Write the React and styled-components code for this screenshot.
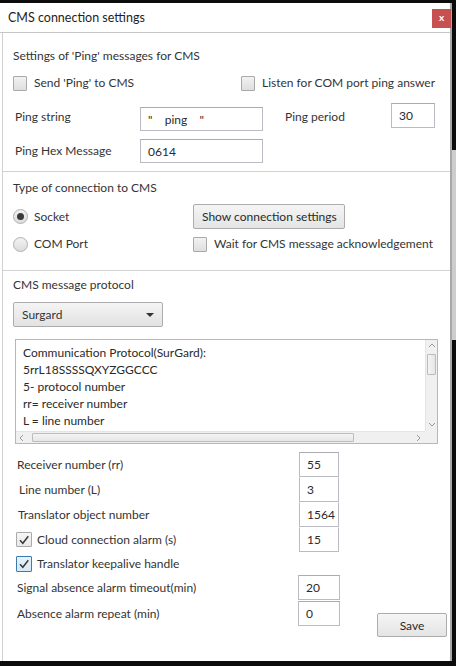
import React from "react";
import styled, { createGlobalStyle } from "styled-components";

const Global = createGlobalStyle`
  html, body { margin: 0; padding: 0; height: 666px; overflow: hidden; background: #0c0c0c; }
  * { box-sizing: border-box; }
  body { font-family: Lato, "Open Sans", "Noto Sans", sans-serif; font-size: 12px; color: #343434; }
`;

const Frame = styled.div`
  display: flex;
  height: 666px;
  padding: 3px 0 5px 0;
`;

const Window = styled.div`
  width: 452px;
  background: #fff;
  border-right: 2px solid #a8a8a8;
  display: flex;
  flex-direction: column;
`;

const SideStrip = styled.div`
  flex: 1;
  margin-top: -3px;
  margin-bottom: -5px;
  background: linear-gradient(to bottom, #0c0c0c 0, #0c0c0c 150px, #cdcdcd 150px, #cdcdcd 340px, #0c0c0c 340px);
`;

const TitleBar = styled.div`
  height: 30px;
  border-bottom: 1px solid #c6c6c6;
  display: flex;
  align-items: flex-start;
  justify-content: space-between;
  padding-left: 8px;
`;

const Title = styled.div`
  font-size: 12.5px;
  line-height: 16px;
  margin-top: 7px;
  color: #1e1e1e;
`;

const CloseBtn = styled.div`
  width: 19px;
  height: 19px;
  margin-top: 6px;
  margin-right: -1px;
  background: #c75050;
  color: #fff;
  font-size: 10px;
  font-weight: bold;
  line-height: 17px;
  text-align: center;
`;

const Body = styled.div`
  flex: 1;
  margin-left: 2px;
  border-left: 1px solid #d0d0d0;
  display: flex;
  flex-direction: column;
`;

const Section = styled.div`
  padding: ${(p) => p.$pad};
  border-bottom: ${(p) => (p.$last ? "none" : "1px solid #d2d2d2")};
  display: flex;
  flex-direction: column;
`;

const Heading = styled.div`
  line-height: 16px;
  height: 16px;
`;

const Text = styled.span`
  line-height: 16px;
  white-space: nowrap;
`;

const CheckRow = styled.div`
  display: grid;
  grid-template-columns: 228px auto;
  margin-top: ${(p) => p.$mt || 0}px;
  height: ${(p) => p.$h || 15}px;
  align-items: center;
`;

const CheckLabel = styled.label`
  display: flex;
  align-items: center;
  gap: ${(p) => p.$gap || 7}px;
  padding-left: ${(p) => p.$indent || 0}px;
  white-space: nowrap;
`;

const Box = styled.span`
  width: ${(p) => p.$w || 14}px;
  height: ${(p) => p.$h || 15}px;
  flex: none;
  border: 1px solid ${(p) => (p.$focus ? "#3d7bad" : "#a9a9a9")};
  background: ${(p) =>
    p.$focus
      ? "linear-gradient(#e6f2fb, #d6e9f7)"
      : p.$checked
      ? "linear-gradient(#f6f6f6, #e9e9e9)"
      : "linear-gradient(#f2f2f2, #dedede)"};
  border-radius: 1px;
  display: flex;
  align-items: center;
  justify-content: center;
`;

const Radio = styled.span`
  width: 15px;
  height: 15px;
  flex: none;
  border-radius: 50%;
  border: 1px solid #b0b0b0;
  background: linear-gradient(#f2f2f2, #dcdcdc);
  display: flex;
  align-items: center;
  justify-content: center;
  &::after {
    content: "";
    width: 7px;
    height: 7px;
    border-radius: 50%;
    background: ${(p) => (p.$on ? "#3a3a3a" : "transparent")};
  }
`;

const FieldGrid = styled.div`
  display: grid;
  grid-template-columns: ${(p) => p.$cols};
  height: ${(p) => p.$h}px;
  margin-top: ${(p) => p.$mt || 0}px;
  padding-left: ${(p) => p.$indent || 0}px;
  align-items: center;
`;

const Input = styled.div`
  width: ${(p) => p.$w}px;
  height: ${(p) => p.$h || 25}px;
  align-self: ${(p) => p.$align || "center"};
  border: 1px solid #b9bcc2;
  border-top-color: ${(p) => (p.$joined ? "transparent" : "#a9acb2")};
  margin-top: ${(p) => (p.$joined ? -1 : 0)}px;
  margin-left: ${(p) => p.$ml || 0}px;
  background: #fff;
  padding-left: 7px;
  display: flex;
  align-items: center;
  white-space: pre;
  color: #2a2a2a;
`;

const Btn = styled.div`
  width: ${(p) => p.$w}px;
  height: ${(p) => p.$h}px;
  border: 1px solid #acacac;
  border-radius: 2px;
  background: linear-gradient(#f5f5f5, #e4e4e4);
  display: flex;
  align-items: center;
  justify-content: ${(p) => (p.$center ? "center" : "flex-start")};
  padding-left: ${(p) => (p.$center ? 0 : 8)}px;
  white-space: nowrap;
  color: #2a2a2a;
`;

const ConnGrid = styled.div`
  display: grid;
  grid-template-columns: 180px auto;
  grid-template-rows: 25px 18px;
  row-gap: 6px;
  margin-top: 8px;
  align-items: center;
`;

const Select = styled.div`
  width: 150px;
  height: 25px;
  margin-top: 9px;
  border: 1px solid #acacac;
  border-radius: 2px;
  background: linear-gradient(#f4f4f4, #e2e2e2);
  display: flex;
  align-items: center;
  justify-content: space-between;
  padding: 0 8px 0 8px;
`;

const Arrow = styled.span`
  width: 0;
  height: 0;
  border-left: 4px solid transparent;
  border-right: 4px solid transparent;
  border-top: 4px solid #333;
`;

const TextArea = styled.div`
  width: 423px;
  height: 105px;
  margin: 12px 0 0 2px;
  border: 1px solid #b4b7bd;
  display: grid;
  grid-template-columns: 1fr 12px;
  grid-template-rows: 1fr 12px;
  background: #fff;
`;

const AreaText = styled.div`
  padding: 4px 0 0 7px;
  line-height: 17px;
  overflow: hidden;
  white-space: nowrap;
  color: #2a2a2a;
`;

const VScroll = styled.div`
  background: #f0f0f0;
  border-left: 1px solid #e4e4e4;
  display: grid;
  grid-template-rows: 12px 1fr 12px;
  justify-items: center;
  align-items: center;
`;

const HScroll = styled.div`
  background: #f0f0f0;
  border-top: 1px solid #e4e4e4;
  display: grid;
  grid-template-columns: 12px 1fr 12px;
  align-items: center;
  justify-items: center;
`;

const Corner = styled.div`
  background: #f0f0f0;
`;

const VTrack = styled.div`
  align-self: stretch;
  width: 100%;
  display: flex;
  justify-content: center;
`;

const VThumb = styled.div`
  width: 9px;
  height: 21px;
  margin-top: 2px;
  border: 1px solid #bcbcbc;
  background: linear-gradient(to right, #f4f4f4, #e6e6e6);
  border-radius: 1px;
`;

const HTrack = styled.div`
  justify-self: stretch;
  height: 100%;
  display: flex;
  align-items: center;
`;

const HThumb = styled.div`
  width: 322px;
  height: 9px;
  margin-left: 4px;
  border: 1px solid #bcbcbc;
  background: linear-gradient(#f4f4f4, #e6e6e6);
  border-radius: 1px;
`;

const Lower = styled.div`
  display: flex;
  align-items: flex-start;
  margin-top: 8px;
`;

const LowerGrid = styled.div`
  display: grid;
  grid-template-columns: 286px 42px;
  grid-template-rows: 25px 25px 25px 25px 23px 26px 25px;
  align-items: center;
`;

const LowerLabel = styled.span`
  padding-left: ${(p) => p.$indent || 4}px;
  white-space: nowrap;
  line-height: 16px;
`;

const SaveWrap = styled.div`
  margin: 161px 0 0 36px;
`;

const Chevron = ({ dir }) => {
  const d = {
    up: "M1 5 L4 2 L7 5",
    down: "M1 2 L4 5 L7 2",
    left: "M5 1 L2 4 L5 7",
    right: "M2 1 L5 4 L2 7",
  }[dir];
  return (
    <svg width="8" height="8" viewBox="0 0 8 8">
      <path d={d} fill="none" stroke="#9a9a9a" strokeWidth="1" />
    </svg>
  );
};

const Check = () => (
  <svg width="12" height="12" viewBox="0 0 12 12">
    <path d="M2 6.2 L4.8 9.3 L10.3 2.2" fill="none" stroke="#3a3a3a" strokeWidth="1.5" />
  </svg>
);

export default function App() {
  return (
    <>
      <Global />
      <Frame>
        <Window>
          <TitleBar>
            <Title>CMS connection settings</Title>
            <CloseBtn>x</CloseBtn>
          </TitleBar>
          <Body>
            <Section $pad="15px 0 8px 10px">
              <Heading>Settings of 'Ping' messages for CMS</Heading>
              <CheckRow $mt={11}>
                <CheckLabel>
                  <Box />
                  <Text>Send 'Ping' to CMS</Text>
                </CheckLabel>
                <CheckLabel>
                  <Box />
                  <Text>Listen for COM port ping answer</Text>
                </CheckLabel>
              </CheckRow>
              <FieldGrid $cols="125px 123px 22px 106px 44px" $h={28} $mt={13} $indent={2}>
                <Text>Ping string</Text>
                <Input $w={123} $h={24} $align="end">{'"    ping    "'}</Input>
                <span />
                <Text>Ping period</Text>
                <Input $w={44} $align="start">30</Input>
              </FieldGrid>
              <FieldGrid $cols="125px 123px" $h={24} $mt={8} $indent={2}>
                <Text>Ping Hex Message</Text>
                <Input $w={123} $h={24}>0614</Input>
              </FieldGrid>
            </Section>
            <Section $pad="8px 0 17px 10px">
              <Heading>Type of connection to CMS</Heading>
              <ConnGrid>
                <CheckLabel $gap={6}>
                  <Radio $on />
                  <Text>Socket</Text>
                </CheckLabel>
                <Btn $w={152} $h={25}>Show connection settings</Btn>
                <CheckLabel $gap={6}>
                  <Radio />
                  <Text>COM Port</Text>
                </CheckLabel>
                <CheckLabel>
                  <Box />
                  <Text>Wait for CMS message acknowledgement</Text>
                </CheckLabel>
              </ConnGrid>
            </Section>
            <Section $pad="6px 0 0 10px" $last>
              <Heading>CMS message protocol</Heading>
              <Select>
                <Text>Surgard</Text>
                <Arrow />
              </Select>
              <TextArea>
                <AreaText>
                  <div>Communication Protocol(SurGard):</div>
                  <div>5rrL18SSSSQXYZGGCCC</div>
                  <div>5- protocol number</div>
                  <div>rr= receiver number</div>
                  <div>L = line number</div>
                </AreaText>
                <VScroll>
                  <Chevron dir="up" />
                  <VTrack>
                    <VThumb />
                  </VTrack>
                  <Chevron dir="down" />
                </VScroll>
                <HScroll>
                  <Chevron dir="left" />
                  <HTrack>
                    <HThumb />
                  </HTrack>
                  <Chevron dir="right" />
                </HScroll>
                <Corner />
              </TextArea>
              <Lower>
                <LowerGrid>
                  <LowerLabel>Receiver number (rr)</LowerLabel>
                  <Input $w={40}>55</Input>
                  <LowerLabel $indent={6}>Line number (L)</LowerLabel>
                  <Input $w={40} $joined>3</Input>
                  <LowerLabel $indent={5}>Translator object number</LowerLabel>
                  <Input $w={40} $joined>1564</Input>
                  <CheckLabel $indent={3} $gap={5}>
                    <Box $w={16} $h={15} $checked>
                      <Check />
                    </Box>
                    <Text>Cloud connection alarm (s)</Text>
                  </CheckLabel>
                  <Input $w={40} $joined>15</Input>
                  <CheckLabel $indent={3} $gap={5}>
                    <Box $w={16} $h={16} $checked $focus>
                      <Check />
                    </Box>
                    <Text>Translator keepalive handle</Text>
                  </CheckLabel>
                  <span />
                  <LowerLabel>Signal absence alarm timeout(min)</LowerLabel>
                  <Input $w={42} $ml={-1} $align="start">20</Input>
                  <LowerLabel>Absence alarm repeat (min)</LowerLabel>
                  <Input $w={42} $ml={-1}>0</Input>
                </LowerGrid>
                <SaveWrap>
                  <Btn $w={70} $h={24} $center>Save</Btn>
                </SaveWrap>
              </Lower>
            </Section>
          </Body>
        </Window>
        <SideStrip />
      </Frame>
    </>
  );
}
